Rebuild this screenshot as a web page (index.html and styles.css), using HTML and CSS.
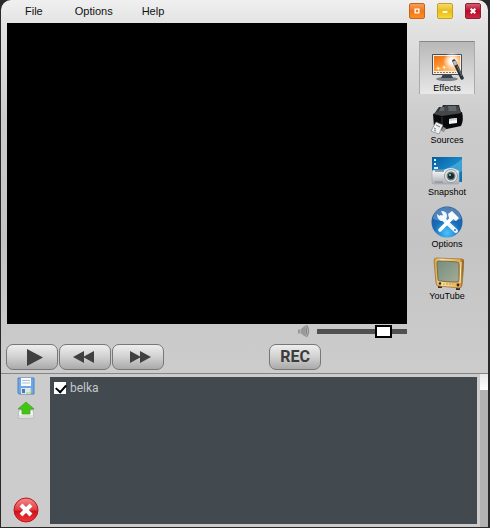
FILE: index.html
```html
<!DOCTYPE html>
<html lang="en">
<head>
<meta charset="utf-8">
<title>Video recorder</title>
<link rel="stylesheet" href="styles.css">
</head>
<body>
<div class="window">
  <header class="titlebar">
    <nav class="menu">
      <button type="button">File</button>
      <button type="button">Options</button>
      <button type="button">Help</button>
    </nav>
    <div class="controls">
      <button type="button" class="control orange" aria-label="Restore"><svg viewBox="0 0 15 15"><path d="M5.500 5.500h4v4h-4z" fill="none" stroke="#fff" stroke-width="1.500"/></svg></button>
      <button type="button" class="control yellow" aria-label="Minimize"><svg viewBox="0 0 15 15"><path d="M5 8.500h5" stroke="#fff" stroke-width="2"/></svg></button>
      <button type="button" class="control red" aria-label="Close"><svg viewBox="0 0 15 15"><path d="M5 5l5 5M10 5l-5 5" stroke="#fff" stroke-width="2.200"/></svg></button>
    </div>
  </header>

  <main class="stage">
    <section class="player">
      <div class="video"></div>
      <div class="volume">
        <svg class="speaker" viewBox="0 0 14 14"><path d="M1 5.500h2.500v4H1z" fill="#999"/><path d="M4 5L8 1.500v11L4 9.500z" fill="#999"/><path d="M8.500 1q3 6 0 12" fill="#777"/><path d="M9.500 1q4 6 0 12" fill="none" stroke="#888" stroke-width="1.300"/></svg>
        <input type="range" min="0" max="100" value="80" aria-label="Volume">
      </div>
    </section>
    <aside class="tools">
      <button type="button" class="tool selected">
        <svg viewBox="0 0 34 34">
          <defs><linearGradient id="screen" x2="1" y2="1"><stop stop-color="#f36b08"/><stop offset=".5" stop-color="#ff9a3b"/><stop offset="1" stop-color="#ffd9a0"/></linearGradient><radialGradient id="glow"><stop stop-color="#fff"/><stop offset=".4" stop-color="#fff" stop-opacity=".85"/><stop offset="1" stop-color="#fff" stop-opacity="0"/></radialGradient></defs>
          <ellipse cx="17" cy="30" rx="11" ry="2" fill="#788089"/><path d="M13 25h8l2 4H11z" fill="#39424b"/>
          <rect x="2" y="5" width="30" height="21" rx="1" fill="#4b4e50"/><rect x="3" y="6" width="28" height="19" fill="#f2eee8"/><rect x="4" y="7" width="26" height="15" fill="url(#screen)"/>
          <path d="M4 23.500h22" stroke="#9a765a" stroke-dasharray="2 1"/>
          <circle cx="22" cy="12" r="9" fill="url(#glow)"/><path d="M8 17l1 2 2 0-2 1 0 2-1-2-2 0 1-1zM14 16l1 2 2 0-2 1 0 2-1-2-2 0 1-1z" fill="#fff3bf"/>
          <path d="M24 12l8 17" stroke="#2b3036" stroke-width="3.500" stroke-linecap="round"/><path d="M24 12l2 4" stroke="#b7bec4" stroke-width="3"/><path d="M27 17l5 10" stroke="#78818a" stroke-width=".8"/>
        </svg>
        <span>Effects</span>
      </button>
      <button type="button" class="tool">
        <svg viewBox="0 0 34 34">
          <path d="M4 13L9 6l3 0 1-2 16 0 3 11-28 2z" fill="#2a2c2f"/><path d="M11 6l5 0-2 5H8zM18 5l8 0 1 5H17z" fill="#62676b"/><path d="M14 6l3-2 2 5-4 2zM26 5l3 1 1 6-3-1z" fill="#434749"/>
          <path d="M3 13l12-1 17-1q2 8-1 14L12 29 4 26z" fill="#090a0b"/><path d="M3 13l9 2 20-3-4-2H8z" fill="#44484b"/><path d="M12 16v11" stroke="#3a3d40"/>
          <path d="M19 18l8-1v5l-8 1z" fill="#f4f6f7"/><path d="M19 18l8-1v2l-8 1z" fill="#cbd1d4"/>
          <path d="M6 21l7 3-4 9-8-3z" fill="#eff1f2" stroke="#777" stroke-width=".6"/><path d="M4 27l2 1M4 29l2 1M6 24l4 2" stroke="#777" stroke-width="1"/><path d="M13 26l3 1-2 4-3-1z" fill="#8d9295"/>
        </svg>
        <span>Sources</span>
      </button>
      <button type="button" class="tool">
        <svg viewBox="0 0 34 34">
          <defs><linearGradient id="sea" x2="1" y2="1"><stop stop-color="#075b9e"/><stop offset=".5" stop-color="#1686c6"/><stop offset="1" stop-color="#0872b2"/></linearGradient><linearGradient id="silver" y2="1" x2="0"><stop stop-color="#fafafa"/><stop offset="1" stop-color="#a9adb2"/></linearGradient></defs>
          <path d="M2 4h30v25H2z" fill="url(#sea)"/><path d="M2 19Q20 17 32 6v12Q22 25 2 25z" fill="#56b4df" opacity=".65"/><path d="M4 7h2M4 11h2M4 15h4" stroke="#d9edf6" stroke-width="2"/>
          <rect x="2" y="17" width="27" height="14" rx="2" fill="url(#silver)" stroke="#a0a6ac" stroke-width=".7"/><path d="M5 18h9" stroke="#6289a6" stroke-width="1.500"/><path d="M14 17q7-4 13 0" fill="#e7eaed"/><path d="M5 29h8" stroke="#82878c"/>
          <circle cx="21" cy="23" r="6.500" fill="#e6e8ea" stroke="#959a9f"/><circle cx="21" cy="23" r="4.500" fill="#6d7a80"/><circle cx="21" cy="23" r="3" fill="#142b2b"/><circle cx="20" cy="22" r="1" fill="#96dbc5"/>
        </svg>
        <span>Snapshot</span>
      </button>
      <button type="button" class="tool">
        <svg viewBox="0 0 34 34">
          <defs><radialGradient id="ball" cx=".5" cy=".85" r=".85"><stop stop-color="#4ac4ff"/><stop offset=".5" stop-color="#176db9"/><stop offset="1" stop-color="#1b5599"/></radialGradient></defs>
          <circle cx="17" cy="17" r="15.500" fill="url(#ball)"/><path d="M3 14a14 12 0 0 1 28 0q-13 5-28 0z" fill="#fff" opacity=".24"/>
          <path d="M11 12L26 26" stroke="#eef6fc" stroke-width="4" stroke-linecap="round"/><path d="M7 9l4 3 2-2-2-4q6 0 6 5 0 5-6 5-4-2-4-7z" fill="#f3f8fc"/>
          <path d="M23 12L10 25" stroke="#fff" stroke-width="3.500" stroke-linecap="round"/><path d="M18 9l4-3 7 7-3 3-4-3-3 0z" fill="#f8fbfd"/><circle cx="25" cy="25" r="1" fill="#2b7fbf"/>
        </svg>
        <span>Options</span>
      </button>
      <button type="button" class="tool">
        <svg viewBox="0 0 34 34">
          <defs><linearGradient id="gold"><stop stop-color="#d49a3c"/><stop offset=".25" stop-color="#ffe3a0"/><stop offset=".85" stop-color="#e3ad53"/><stop offset="1" stop-color="#825016"/></linearGradient><linearGradient id="glass" x2="1" y2="1"><stop stop-color="#748d82"/><stop offset="1" stop-color="#a5ac94"/></linearGradient></defs>
          <path d="M8 28h4v3H8zM26 29h4v4h-4z" fill="#402911"/><path d="M6 1l26 1q2 0 2 3l-2 23q0 3-3 3L9 29q-3 0-3-3L4 4q0-3 2-3z" fill="url(#gold)" stroke="#9b783e" stroke-width=".8"/>
          <path d="M8 4q10 0 19 1 2 0 2 3v15q0 2-3 2-10 0-16-1-2 0-2-2L7 6q0-2 1-2z" fill="url(#glass)" stroke="#776d46"/><path d="M13 27h10" stroke="#c7964a" stroke-dasharray="2 1"/><circle cx="10" cy="26.500" r="1.300" fill="#3a2411"/><circle cx="28" cy="28" r="1.400" fill="#3a2411"/><path d="M31 5l-1 21" stroke="#fff1ba"/>
        </svg>
        <span>YouTube</span>
      </button>
    </aside>
  </main>

  <div class="transport">
    <button type="button" class="key" aria-label="Play"><svg viewBox="0 0 50 24"><path d="M20 4l16 8.500L20 21z"/></svg></button>
    <button type="button" class="key" aria-label="Rewind"><svg viewBox="0 0 50 24"><path d="M24 6v12l-11-6zM34 6v12l-11-6z"/></svg></button>
    <button type="button" class="key" aria-label="Fast forward"><svg viewBox="0 0 50 24"><path d="M17 6v12l11-6zM27 6v12l11-6z"/></svg></button>
    <button type="button" class="key rec">REC</button>
  </div>

  <section class="library">
    <div class="actions">
      <button type="button" aria-label="Save"><svg class="small" viewBox="0 0 18 18"><path d="M1 1h16v16H2l-1-1z" fill="#73a5e0" stroke="#4d82c4"/><path d="M4 1h10v8H4z" fill="#f9fbfd"/><path d="M5 3.500h8M5 6h8" stroke="#aac0d7"/><path d="M4 11h10v6H4z" fill="#dce8ee"/><path d="M5 12h3v4H5z" fill="#4a7bb6"/><path d="M9 16h5v-4" stroke="#a4c777" fill="none"/></svg></button>
      <button type="button" aria-label="Upload"><svg class="small" viewBox="0 0 18 18"><path d="M2 9l-1 8h16l-1-8z" fill="#f8f8f8" stroke="#aaa" stroke-width=".7"/><path d="M2 15h14" stroke="#c4c4c4"/><path d="M9 1l8 7h-4v5H5V8H1z" fill="#43c514" stroke="#42a52c" stroke-width=".8"/></svg></button>
      <button type="button" class="remove" aria-label="Delete"><svg viewBox="0 0 26 26"><defs><linearGradient id="danger" y2="1" x2="0"><stop stop-color="#f58c8c"/><stop offset=".5" stop-color="#df3a3e"/><stop offset=".55" stop-color="#cf1118"/><stop offset="1" stop-color="#f13a3a"/></linearGradient></defs><circle cx="13" cy="13" r="12" fill="url(#danger)" stroke="#b9161b"/><path d="M8 8l10 10M18 8l-10 10" stroke="#fff" stroke-width="4"/></svg></button>
    </div>
    <div class="clips">
      <label class="clip"><input type="checkbox" checked><span>belka</span></label>
    </div>
    <div class="scrollbar"><div class="thumb"></div></div>
  </section>
</div>
</body>
</html>
```
FILE: styles.css
```css
* { box-sizing: border-box; }
body { margin: 0; background: #292929; font-family: "Liberation Sans", Arial, sans-serif; color: #111; }
button { margin: 0; padding: 0; border: 0; background: none; font: inherit; color: inherit; }
svg { display: block; }

.window {
  display: flex;
  flex-direction: column;
  min-height: calc(100vh - 1px);
  margin: 0 2px 1px 1px;
  border-radius: 10px 10px 0 0;
  background: linear-gradient(#f0f0f0, #e2e2e2 25px, #cccccc 120px, #c4c4c4 240px, #cccccc 372px, #cccccc);
}

.titlebar { display: flex; justify-content: space-between; height: 23px; padding: 0 7px 0 24px; }
.menu { display: flex; align-items: center; gap: 32px; padding-bottom: 2px; font-size: 11px; }
.menu button:last-child { margin-left: -3px; }
.controls { display: flex; align-items: center; gap: 12px; padding-bottom: 2px; }
.control { width: 16px; height: 16px; border-radius: 2px; }
.control svg { width: 100%; height: 100%; }
.orange { border: 1px solid #c66520; background: linear-gradient(#f5a05d, #f47513 50%, #fb8f22); }
.yellow { border: 1px solid #c4a02b; background: linear-gradient(#f5da6c, #eabd14 50%, #f7d83b); }
.red { border: 1px solid #8e1e30; background: linear-gradient(#d85c70, #b70b29 50%, #ca2841); }

.stage { display: flex; }
.player { flex: 1; margin-left: 6px; }
.video { height: 301px; background: #000; }
.volume { display: flex; align-items: center; justify-content: flex-end; gap: 6px; height: 14px; }
.speaker { width: 14px; height: 14px; }
.volume input { appearance: none; width: 90px; height: 13px; margin: 0; background: linear-gradient(#505050, #505050) center / 100% 5px no-repeat; }
.volume input::-webkit-slider-thumb { appearance: none; width: 17px; height: 13px; border: 2px solid #000; background: #fff; }

.tools { display: flex; flex-direction: column; width: 81px; padding: 18px 13px 0 12px; }
.tool { display: flex; flex-direction: column; align-items: center; justify-content: flex-end; height: 52px; border: 1px solid transparent; border-bottom: 0; font-size: 9px; line-height: 11px; color: #000; }
.tool svg { width: 34px; height: 34px; }
.selected { height: 53px; border-color: #888 #aaa; background: linear-gradient(#b8b8b8, #e8e8e8); }

.transport { display: flex; gap: 1px; padding: 6px 5px 3px; border-bottom: 1px solid #858585; }
.key { width: 52px; height: 26px; border: 1px solid #777; border-radius: 7px; background: linear-gradient(#eeeeee, #d0d0d0 50%, #aaaaaa); color: #3c3c3c; }
.key svg { width: 50px; height: 24px; fill: #404040; }
.rec { margin-left: 104px; font-family: Roboto, sans-serif; font-size: 16px; font-weight: 700; line-height: 24px; }

.library { display: flex; flex: 1; }
.actions { display: flex; flex-direction: column; align-items: center; gap: 6px; width: 49px; padding: 3px 0 4px; }
.small { width: 18px; height: 18px; }
.remove { margin-top: auto; }
.remove svg { width: 26px; height: 26px; }
.clips { flex: 1; margin: 3px 3px 3px 0; padding: 4px; background: #42494f; }
.clip { display: flex; align-items: center; gap: 4px; font-family: Roboto, sans-serif; font-size: 12px; line-height: 14px; color: #c4c7c9; }
.clip input { appearance: none; width: 12px; height: 12px; margin: 0; background: #fff; }
.clip input:checked::before { content: ""; display: block; width: 8px; height: 5px; margin: 2px; border: solid #000; border-width: 0 0 2px 2px; transform: rotate(-48deg); }
.scrollbar { width: 8px; background: #b2b2b2; }
.thumb { height: 16px; background: linear-gradient(#e9e9e9, #fff); }
```
